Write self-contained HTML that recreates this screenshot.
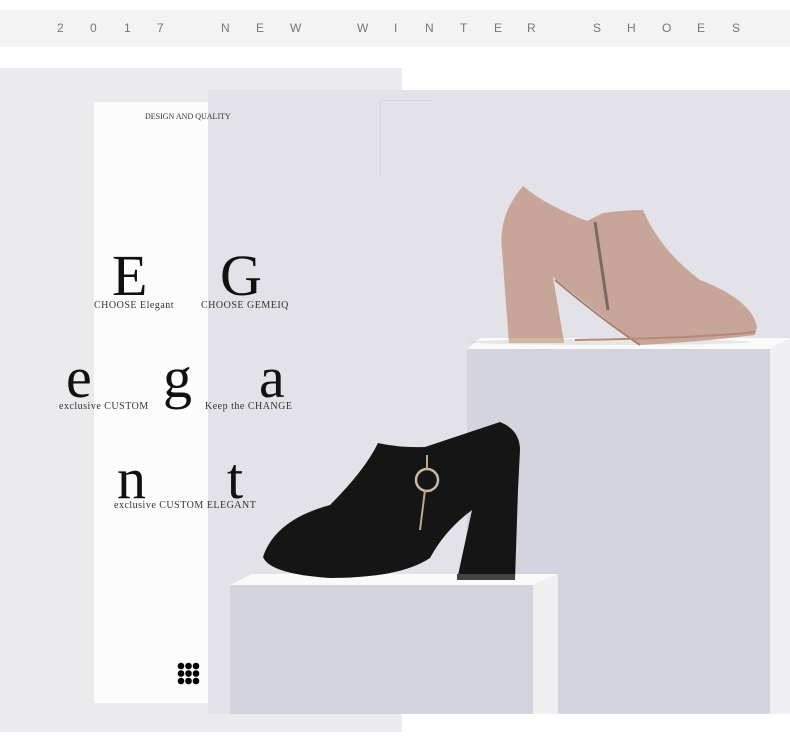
<!DOCTYPE html>
<html><head><meta charset="utf-8"><style>
html,body{margin:0;padding:0;background:#fff;}
body{width:790px;height:756px;position:relative;overflow:hidden;font-family:"Liberation Serif",serif;}
.a{position:absolute;}
.bar{left:0;top:10px;width:790px;height:37px;background:#f3f3f3;}
.bar span{position:absolute;top:11px;font-family:"Liberation Sans",sans-serif;font-size:12px;color:#777;}
.big{position:absolute;font-size:58px;line-height:58px;color:#111;}
.cap{position:absolute;font-size:10px;color:#333;white-space:nowrap;letter-spacing:0.5px;}
</style></head><body>
<div class="a bar">
<span style="left:57px">2</span><span style="left:90px">0</span><span style="left:124px">1</span><span style="left:157px">7</span>
<span style="left:221px">N</span><span style="left:256px">E</span><span style="left:290px">W</span>
<span style="left:357px">W</span><span style="left:394px">I</span><span style="left:425px">N</span><span style="left:460px">T</span><span style="left:494px">E</span><span style="left:527px">R</span>
<span style="left:593px">S</span><span style="left:627px">H</span><span style="left:662px">O</span><span style="left:697px">E</span><span style="left:732px">S</span>
</div>
<div class="a" style="left:0;top:68px;width:402px;height:664px;background:#ebebee"></div>
<div class="a" style="left:208px;top:90px;width:582px;height:624px;background:#e2e2e8"></div>
<div class="a" style="left:94px;top:102px;width:114px;height:601px;background:#fcfcfc"></div>
<div class="a" style="left:380px;top:100px;width:52px;height:1px;background:#d6d6dc"></div>
<div class="a" style="left:380px;top:100px;width:1px;height:75px;background:#d6d6dc"></div>
<div class="cap" style="left:145px;top:112px;font-size:8px;letter-spacing:0">DESIGN AND QUALITY</div>

<div class="big" style="left:112px;top:247px">E</div>
<div class="big" style="left:220px;top:247px">G</div>
<div class="cap" style="left:94px;top:300px">CHOOSE Elegant</div>
<div class="cap" style="left:201px;top:300px">CHOOSE GEMEIQ</div>
<div class="big" style="left:66px;top:349px">e</div>
<div class="big" style="left:163px;top:349px">g</div>
<div class="big" style="left:259px;top:349px">a</div>
<div class="cap" style="left:59px;top:401px">exclusive CUSTOM</div>
<div class="cap" style="left:205px;top:401px">Keep the CHANGE</div>
<div class="big" style="left:117px;top:450px">n</div>
<div class="big" style="left:227px;top:450px">t</div>
<div class="cap" style="left:114px;top:500px">exclusive CUSTOM ELEGANT</div>

<svg class="a" style="left:177px;top:662px" width="23" height="23" viewBox="0 0 23 23">
<g fill="#000"><circle cx="4" cy="4" r="3.3"/><circle cx="11.5" cy="4" r="3.3"/><circle cx="19" cy="4" r="3.3"/>
<circle cx="4" cy="11.5" r="3.3"/><circle cx="11.5" cy="11.5" r="3.3"/><circle cx="19" cy="11.5" r="3.3"/>
<circle cx="4" cy="19" r="3.3"/><circle cx="11.5" cy="19" r="3.3"/><circle cx="19" cy="19" r="3.3"/></g></svg>

<svg class="a" style="left:0;top:0" width="790" height="756" viewBox="0 0 790 756">
<polygon points="467,349 480,338 790,338 770,349" fill="#fafafa"/>
<rect x="467" y="349" width="303" height="365" fill="#d4d4de"/>
<polygon points="770,349 790,338 790,714 770,714" fill="#f0f0f2"/>
<polygon points="230,585 252,574 558,574 533,585" fill="#fafafa"/>
<rect x="230" y="585" width="303" height="129" fill="#d4d4de"/>
<polygon points="533,585 558,574 558,714 533,714" fill="#f0f0f2"/>
<ellipse cx="610" cy="342" rx="140" ry="3" fill="#000" opacity="0.08"/>
<!-- pink shoe -->
<path d="M523,186 Q545,205 587,221 L603,213 Q625,210 643,210 Q660,250 700,280 Q752,300 757,327 L755,335 Q700,342 640,345 Q600,315 553,277 L564,342 L509,343 L502,250 Q498,215 523,186 Z" fill="#c7a699"/>
<path d="M640,345 Q600,318 555,280" stroke="#a8806f" stroke-width="2" fill="none"/>
<path d="M575,340 Q700,338 755,332" stroke="#b38a7a" stroke-width="2" fill="none"/>
<rect x="509" y="338" width="55" height="5" fill="#d3b6a2"/>
<path d="M595,222 L608,310" stroke="#7a6a64" stroke-width="3"/>
<!-- black shoe -->
<path d="M263,557 Q275,520 330,505 Q365,470 378,443 Q400,448 425,447 L500,422 Q520,430 520,450 L518,490 L515,580 L457,580 L472,510 Q445,530 430,558 Q400,578 330,578 Q270,574 263,557 Z" fill="#151515"/>
<rect x="457" y="574" width="58" height="6" fill="#444"/>
<circle cx="427" cy="480" r="11" fill="none" stroke="#c9b9a0" stroke-width="2.5"/>
<path d="M427,455 L427,469 M425,490 L420,530" stroke="#b9a990" stroke-width="2"/>
</svg>
</body></html>
